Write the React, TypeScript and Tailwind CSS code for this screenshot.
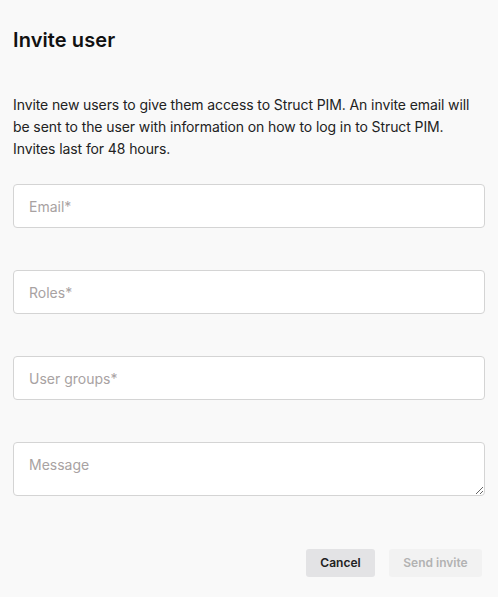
import React from "react";

export default function App() {
  const inputCls =
    "w-full h-[44px] rounded-[4px] border border-[#d4d4d4] bg-white px-[15px] text-[14px] text-[#222] placeholder:text-[#a8a2a2] outline-none";
  return (
    <div
      className="min-h-[597px] w-[498px] bg-[#f9f9f9] px-[13px] flex flex-col"
      style={{ fontFamily: "Inter, 'Noto Sans', sans-serif" }}
    >
      <h1 className="mt-[26px] text-[20px] leading-[28px] font-semibold text-[#111] tracking-[0.1px]">Invite user</h1>
      <p className="mt-[40px] text-[14px] leading-[22px] text-[#222] tracking-[-0.1px]">
        Invite new users to give them access to Struct PIM. An invite email will be sent to the user with information on how to log in to Struct PIM. Invites last for 48 hours.
      </p>
      <div className="mt-[24px] flex flex-col gap-[42px] w-[472px]">
        <input className={inputCls} placeholder="Email*" />
        <input className={inputCls} placeholder="Roles*" />
        <input className={inputCls} placeholder="User groups*" />
        <textarea
          className="w-full h-[54px] rounded-[4px] border border-[#d4d4d4] bg-white px-[15px] pt-[12px] text-[14px] leading-[20px] text-[#222] placeholder:text-[#a8a2a2] outline-none resize-y block"
          placeholder="Message"
        />
      </div>
      <div className="mt-[53px] flex justify-end gap-[14px] pr-[3px]">
        <button className="h-[28px] w-[69px] rounded-[3px] bg-[#e3e3e5] text-[12px] font-semibold text-[#222]">Cancel</button>
        <button className="h-[28px] w-[93px] rounded-[3px] bg-[#f2f2f2] text-[12px] font-semibold text-[#b2b2b2]">Send invite</button>
      </div>
    </div>
  );
}
